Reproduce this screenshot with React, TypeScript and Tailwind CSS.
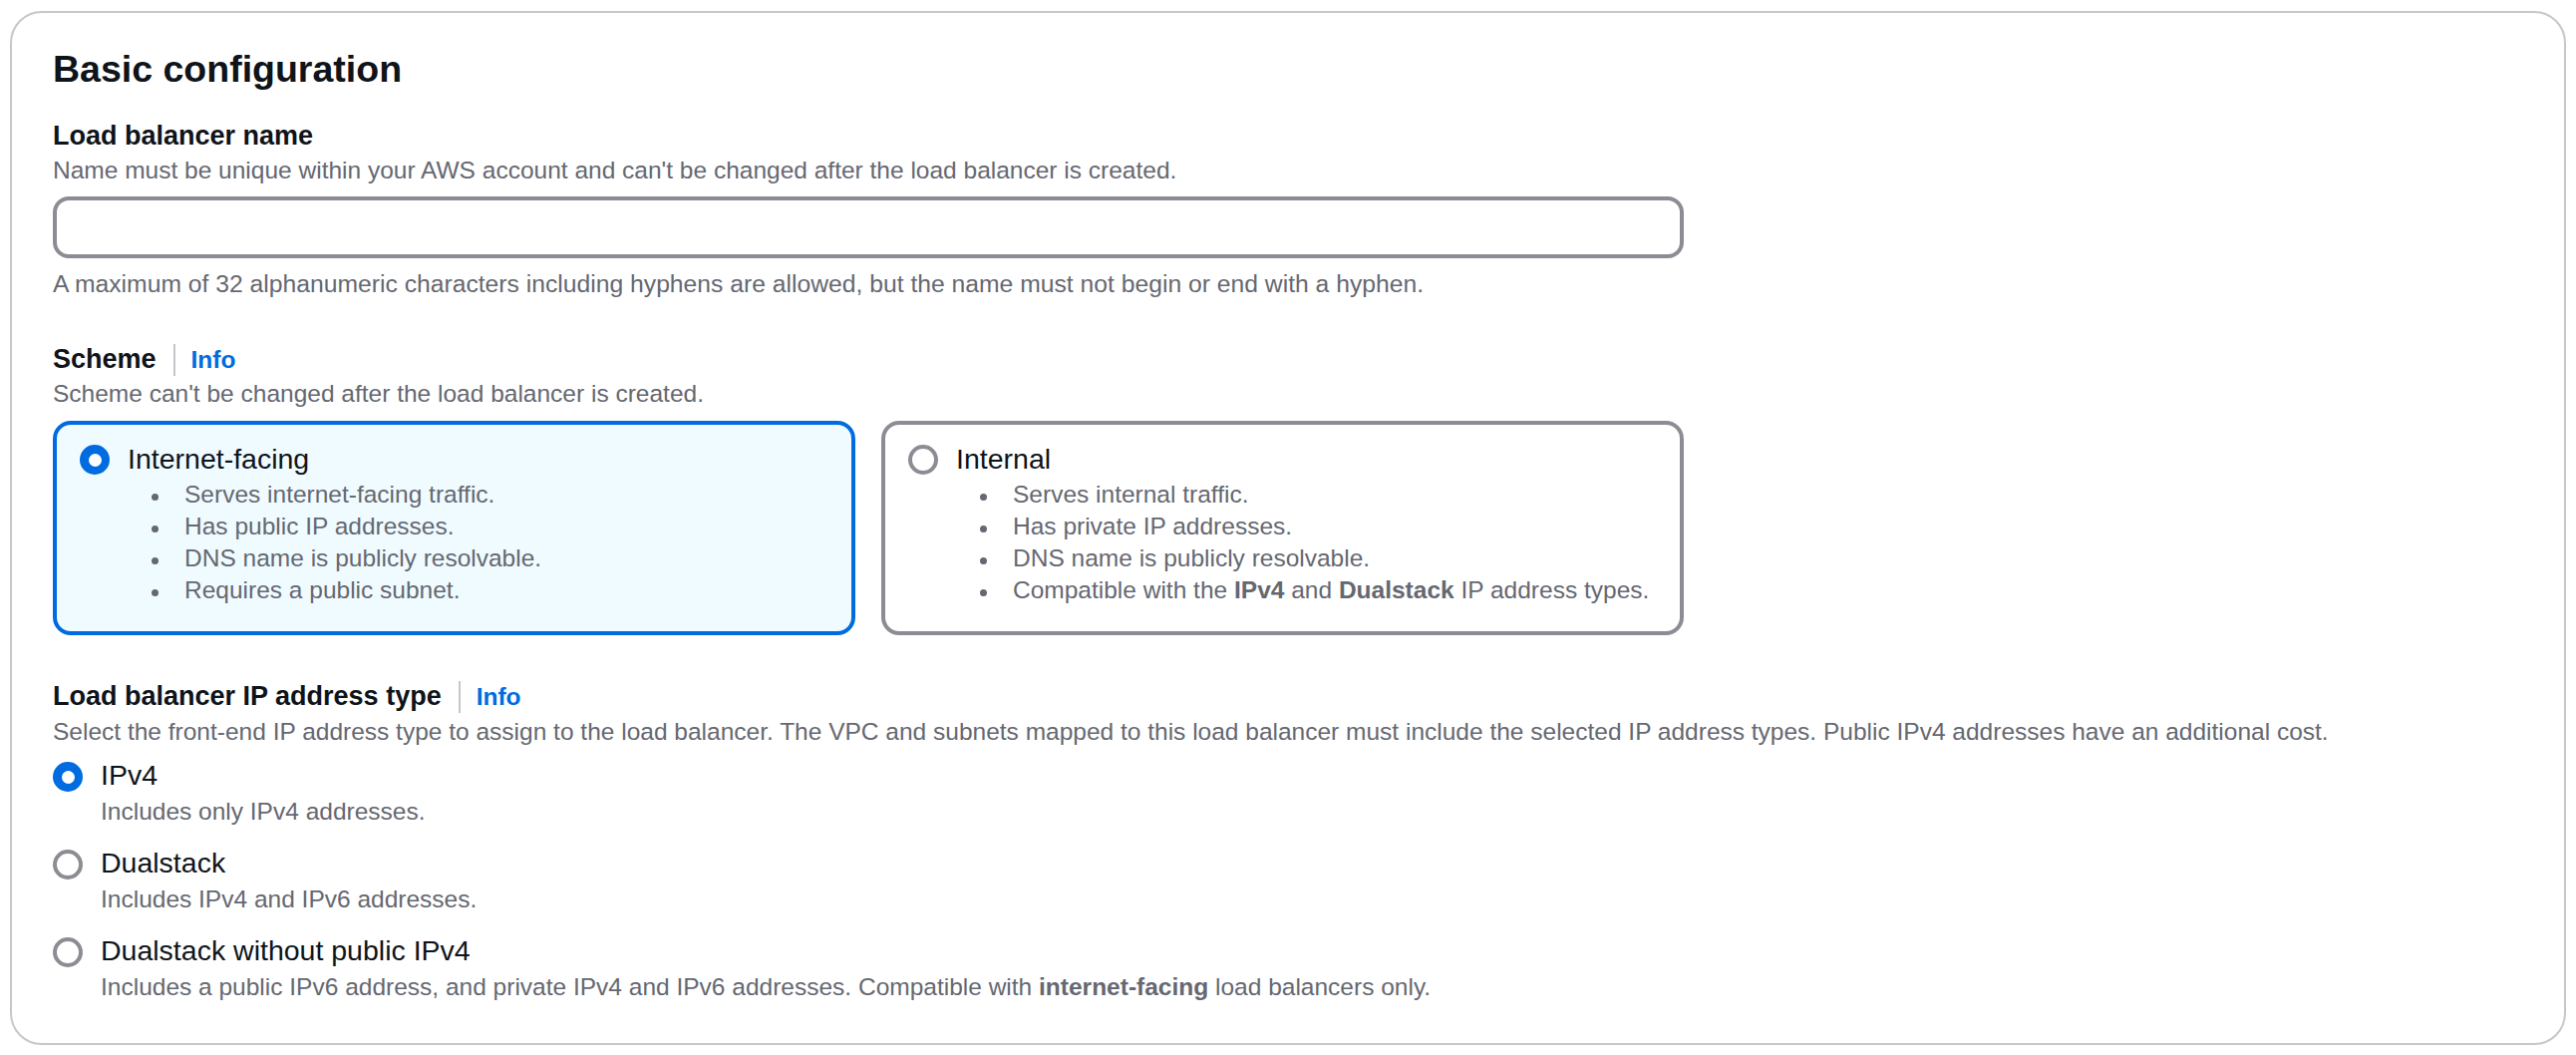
import type { ReactNode } from "react";

function Radio({ checked }: { checked: boolean }) {
  if (checked) {
    return (
      <span className="flex h-[30px] w-[30px] shrink-0 items-center justify-center rounded-full bg-[#006ce0]">
        <span className="h-[13px] w-[13px] rounded-full bg-white" />
      </span>
    );
  }
  return (
    <span className="block h-[30px] w-[30px] shrink-0 rounded-full border-[4px] border-[#8c8c94] bg-white" />
  );
}

function Label({ children, info = false }: { children: ReactNode; info?: boolean }) {
  return (
    <div className="flex items-baseline text-[27px] leading-[36px] font-bold text-[#0f141a]">
      <span>{children}</span>
      {info && (
        <>
          <span className="ml-[17px] h-[32px] w-[2px] self-center bg-[#c6c6cd]" />
          <span className="ml-[16px] text-[24.5px] font-bold text-[#006ce0]">Info</span>
        </>
      )}
    </div>
  );
}

function Tile({
  title,
  items,
  selected = false,
}: {
  title: string;
  items: ReactNode[];
  selected?: boolean;
}) {
  return (
    <div
      className={`flex h-[215px] rounded-[18px] border-[4px] pt-[16px] pb-[25px] pl-[23px] ${
        selected ? "border-[#006ce0] bg-[#f0fbff]" : "border-[#8c8c94] bg-white"
      }`}
    >
      <div className="mt-[4px]">
        <Radio checked={selected} />
      </div>
      <div className="ml-[18px]">
        <div className="text-[28.5px] leading-[36px] text-[#0f141a]">{title}</div>
        <ul className="mt-[2px]">
          {items.map((item, i) => (
            <li key={i} className="flex items-start pl-[24px] text-[24.5px] leading-[32px] text-[#656871]">
              <span className="mt-[15px] h-[7px] w-[7px] shrink-0 rounded-full bg-[#656871]" />
              <span className="ml-[26px]">{item}</span>
            </li>
          ))}
        </ul>
      </div>
    </div>
  );
}

function Option({
  title,
  description,
  checked = false,
  className = "",
}: {
  title: string;
  description: ReactNode;
  checked?: boolean;
  className?: string;
}) {
  return (
    <div className={`flex items-start ${className}`}>
      <div className="mt-[5px]">
        <Radio checked={checked} />
      </div>
      <div className="ml-[18px]">
        <div className="text-[28.5px] leading-[36px] text-[#0f141a]">{title}</div>
        <div className="mt-[3px] text-[24.5px] leading-[32px] text-[#656871]">{description}</div>
      </div>
    </div>
  );
}

export default function App() {
  return (
    <div className="min-h-screen bg-white px-[10px] pt-[11px] font-['Liberation_Sans',Arial,sans-serif]">
      <div className="rounded-[32px] border-2 border-[#c6c6cd] px-[41px] pt-[32px] pb-[40px]">
        <h2 className="text-[37.5px] leading-[48px] font-bold text-[#0f141a]">Basic configuration</h2>

        <div className="mt-[25px]">
          <Label>Load balancer name</Label>
          <p className="mt-[1px] text-[24.5px] leading-[32px] text-[#656871]">
            Name must be unique within your AWS account and can't be changed after the load balancer is created.
          </p>
          <input
            type="text"
            className="mt-[10px] block h-[62px] w-[1636px] rounded-[16px] border-[4px] border-[#8c8c94] bg-white px-[20px] text-[28px] outline-none"
          />
          <p className="mt-[10px] text-[24.7px] leading-[32px] text-[#656871]">
            A maximum of 32 alphanumeric characters including hyphens are allowed, but the name must not begin or end
            with a hyphen.
          </p>
        </div>

        <div className="mt-[41px]">
          <Label info>Scheme</Label>
          <p className="text-[24.5px] leading-[32px] text-[#656871]">
            Scheme can't be changed after the load balancer is created.
          </p>
          <div className="mt-[11px] grid w-[1636px] grid-cols-2 gap-[26px]">
            <Tile
              selected
              title="Internet-facing"
              items={[
                "Serves internet-facing traffic.",
                "Has public IP addresses.",
                "DNS name is publicly resolvable.",
                "Requires a public subnet.",
              ]}
            />
            <Tile
              title="Internal"
              items={[
                "Serves internal traffic.",
                "Has private IP addresses.",
                "DNS name is publicly resolvable.",
                <>
                  Compatible with the <strong>IPv4</strong> and <strong>Dualstack</strong> IP address types.
                </>,
              ]}
            />
          </div>
        </div>

        <div className="mt-[43px]">
          <Label info>Load balancer IP address type</Label>
          <p className="mt-[1px] text-[24.5px] leading-[32px] text-[#656871]">
            Select the front-end IP address type to assign to the load balancer. The VPC and subnets mapped to this load
            balancer must include the selected IP address types. Public IPv4 addresses have an additional cost.
          </p>
          <div className="mt-[9px]">
            <Option checked title="IPv4" description="Includes only IPv4 addresses." />
            <Option className="mt-[17px]" title="Dualstack" description="Includes IPv4 and IPv6 addresses." />
            <Option
              className="mt-[17px]"
              title="Dualstack without public IPv4"
              description={
                <>
                  Includes a public IPv6 address, and private IPv4 and IPv6 addresses. Compatible with{" "}
                  <strong>internet-facing</strong> load balancers only.
                </>
              }
            />
          </div>
        </div>
      </div>
    </div>
  );
}
